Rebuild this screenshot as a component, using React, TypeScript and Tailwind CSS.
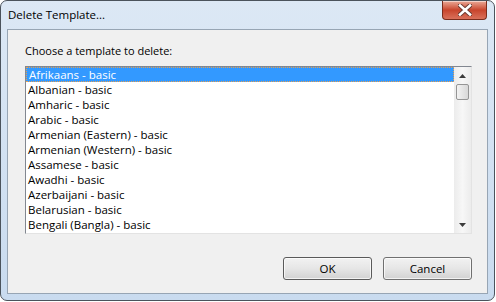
import React from 'react'

const templates = [
  'Afrikaans - basic',
  'Albanian - basic',
  'Amharic - basic',
  'Arabic - basic',
  'Armenian (Eastern) - basic',
  'Armenian (Western) - basic',
  'Assamese - basic',
  'Awadhi - basic',
  'Azerbaijani - basic',
  'Belarusian - basic',
  'Bengali (Bangla) - basic',
]

const uiFont = { fontFamily: '"Open Sans", "Noto Sans", "Liberation Sans", sans-serif' }

function CloseButton() {
  return (
    <div className="absolute right-[7px] top-0 flex h-[19px] w-[45px] items-center justify-center rounded-b-[4px] border border-t-0 border-[#7a2c1c] bg-gradient-to-b from-[#e9a897] via-[#c8442c] to-[#d9705a] shadow-[inset_0_1px_0_rgba(255,255,255,0.5)]">
      <svg width="14" height="12" viewBox="0 0 14 12">
        <path d="M2 1.5 L12 10.5 M12 1.5 L2 10.5" stroke="#6b3a30" strokeWidth="4.5" strokeLinecap="square" />
        <path d="M2 1.5 L12 10.5 M12 1.5 L2 10.5" stroke="#ffffff" strokeWidth="2.6" strokeLinecap="square" />
      </svg>
    </div>
  )
}

function Scrollbar() {
  return (
    <div className="flex w-[17px] flex-col bg-gradient-to-r from-[#ececec] via-[#f7f7f7] to-[#ececec]">
      <div className="flex h-[17px] items-center justify-center">
        <svg width="7" height="4" viewBox="0 0 7 4">
          <path d="M0 4 L3.5 0 L7 4 Z" fill="#3c3c3c" />
        </svg>
      </div>
      <div className="mx-[2px] h-[16px] rounded-[2px] border border-[#959595] bg-gradient-to-r from-[#f3f3f3] to-[#d8d8d8]" />
      <div className="flex-1" />
      <div className="flex h-[17px] items-center justify-center">
        <svg width="7" height="4" viewBox="0 0 7 4">
          <path d="M0 0 L7 0 L3.5 4 Z" fill="#3c3c3c" />
        </svg>
      </div>
    </div>
  )
}

function Button({ label, isDefault }: { label: string; isDefault?: boolean }) {
  return (
    <button
      className={`flex h-[23px] w-[89px] items-center justify-center rounded-[3px] border bg-gradient-to-b from-[#f2f2f2] via-[#e6e6e6] to-[#d2d2d2] text-[11.5px] text-black shadow-[inset_0_0_0_1px_rgba(255,255,255,0.7)] ${
        isDefault ? 'border-[#5a5a5a]' : 'border-[#707070]'
      }`}
    >
      {label}
    </button>
  )
}

export default function App() {
  return (
    <div className="h-[302px] w-[496px] bg-white" style={uiFont}>
      <div className="relative flex h-[301px] w-[495px] flex-col rounded-[7px] border border-[#4b535c] bg-gradient-to-b from-[#dce8f5] to-[#c9dbef] px-[6px] pb-[6px]">
        <div className="flex h-[28px] items-center pl-[1px] text-[11.5px] text-black">Delete Template...</div>
        <CloseButton />

        <div className="flex flex-1 flex-col border border-[#97a5b4] bg-[#f0f0f0] pl-[17px] pr-[15px] pt-[13px]">
          <div className="h-[23px] text-[11px] leading-[16px] text-black">Choose a template to delete:</div>

          <div className="flex h-[168px] w-[447px] border border-t-[#828790] border-l-[#828790] border-r-[#e3e3e3] border-b-[#e3e3e3] bg-white">
            <div className="flex flex-1 flex-col">
              {templates.map((t, i) => (
                <div
                  key={t}
                  className={`flex h-[15px] items-center overflow-hidden whitespace-nowrap pl-[2px] text-[11.5px] leading-[15px] ${
                    i === 0
                      ? 'border border-dotted border-[#e8a050] bg-[#3399ff] pl-[1px] text-white'
                      : 'text-black'
                  }`}
                >
                  {t}
                </div>
              ))}
            </div>
            <Scrollbar />
          </div>

          <div className="mt-[23px] flex justify-end gap-[11px]">
            <Button label="OK" isDefault />
            <Button label="Cancel" />
          </div>
        </div>
      </div>
    </div>
  )
}
